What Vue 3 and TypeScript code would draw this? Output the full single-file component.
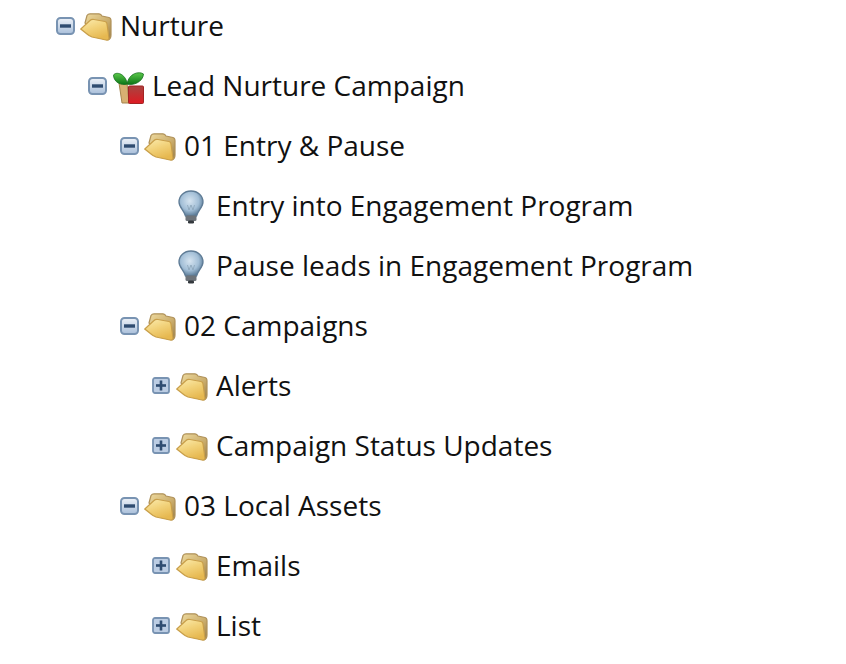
<template>
  <div class="tree">
    <svg class="defs" width="0" height="0" aria-hidden="true">
      <defs>
        <linearGradient id="folderFront" x1="0" y1="0" x2="0.45" y2="1">
          <stop offset="0" stop-color="#fbecb0" />
          <stop offset="0.5" stop-color="#f2d27a" />
          <stop offset="1" stop-color="#e6b850" />
        </linearGradient>
        <linearGradient id="folderBack" x1="0" y1="0" x2="1" y2="1">
          <stop offset="0" stop-color="#eeda9e" />
          <stop offset="0.6" stop-color="#c9ab6a" />
          <stop offset="1" stop-color="#947a48" />
        </linearGradient>
        <linearGradient id="toggleFill" x1="0" y1="0" x2="0" y2="1">
          <stop offset="0" stop-color="#eef2f8" />
          <stop offset="1" stop-color="#a9bfda" />
        </linearGradient>
        <linearGradient id="leaf" x1="0" y1="0" x2="0" y2="1">
          <stop offset="0" stop-color="#5cc94a" />
          <stop offset="1" stop-color="#0a7516" />
        </linearGradient>
        <linearGradient id="redBox" x1="0" y1="0" x2="0" y2="1">
          <stop offset="0" stop-color="#a84440" />
          <stop offset="1" stop-color="#de1a22" />
        </linearGradient>
        <radialGradient id="bulb" cx="0.45" cy="0.4" r="0.62">
          <stop offset="0" stop-color="#d6e4f0" />
          <stop offset="0.6" stop-color="#a3bfd7" />
          <stop offset="1" stop-color="#557692" />
        </radialGradient>
      </defs>
    </svg>

    <div
      v-for="row in rows"
      :key="row.label"
      class="row"
      :class="`depth-${row.depth}`"
    >
      <span class="toggle-slot">
        <svg v-if="row.toggle === 'minus'" class="toggle" viewBox="0 0 19 18">
          <rect x="1" y="1" width="17" height="16" rx="3.500" fill="url(#toggleFill)" stroke="#7893b2" stroke-width="2" />
          <rect x="4" y="7.300" width="11" height="3.400" fill="#2f4c70" />
        </svg>
        <svg v-else-if="row.toggle === 'plus'" class="toggle plus" viewBox="0 0 18 17">
          <rect x="1" y="1" width="16" height="15" rx="2" fill="#bccde3" stroke="#7893b2" stroke-width="1.800" />
          <rect x="4" y="7.200" width="10" height="2.600" fill="#2f4c70" />
          <rect x="7.700" y="3.500" width="2.600" height="10" fill="#2f4c70" />
        </svg>
      </span>

      <svg v-if="row.icon === 'folder'" class="icon folder" viewBox="0 0 32 28">
        <path d="M5 10 L7 2.500 Q8 0.800 10 0.800 L19 0.800 Q21 1 22 3 L29 4.500 Q31 5 31 8 L31 22 Q31 26 28 27 L20 25 Z" fill="url(#folderBack)" stroke="#b0925a" stroke-width="1.200" />
        <path d="M0.800 16 L10 7.500 Q11.500 6 14 6.500 L25 8.500 Q27 9 27 11 L29 25 Q29 27.500 26 27 L12 24 Q8.500 22.500 7 21 Z" fill="url(#folderFront)" stroke="#c99f4a" stroke-width="1.200" />
      </svg>

      <svg v-else-if="row.icon === 'sprout'" class="icon sprout" viewBox="0 0 31 33">
        <path d="M6 12 L14 12 L16 32 L9 32 Z" fill="#d8b072" stroke="#a5854e" stroke-width="1" />
        <path d="M14.500 13 C12 2 3 0.500 0.500 4 C0.500 11 8 15 14.500 13 Z" fill="url(#leaf)" stroke="#17701f" stroke-width="0.8" />
        <path d="M14 13 C16 2 26 0 30.500 3 C30 11 20 15 14 13 Z" fill="url(#leaf)" stroke="#17701f" stroke-width="0.8" />
        <rect x="15.500" y="15" width="15" height="17.500" rx="1" fill="url(#redBox)" stroke="#a32424" stroke-width="1" />
      </svg>

      <svg v-else class="icon bulb" viewBox="0 0 26 34">
        <path d="M13 1 C6 1 1 6 1 12 C1 17.500 6 20 7.500 26 L18.500 26 C20 20 25 17.500 25 12 C25 6 20 1 13 1 Z" fill="url(#bulb)" stroke="#5f7c96" stroke-width="1.300" />
        <path d="M9.500 15 L11 20 L13 15 L15 20 L16.500 15" fill="none" stroke="#8aa3b8" stroke-width="0.8" />
        <rect x="7.500" y="25.500" width="11" height="5.500" rx="1.500" fill="#6e747a" />
        <rect x="10" y="30.500" width="6" height="3" rx="1.300" fill="#34393e" />
      </svg>

      <span class="label">{{ row.label }}</span>
    </div>
  </div>
</template>

<script setup lang="ts">
interface TreeRow {
  label: string;
  depth: number;
  icon: 'folder' | 'sprout' | 'bulb';
  toggle?: 'minus' | 'plus';
}

const rows: TreeRow[] = [
  { label: 'Nurture', depth: 0, icon: 'folder', toggle: 'minus' },
  { label: 'Lead Nurture Campaign', depth: 1, icon: 'sprout', toggle: 'minus' },
  { label: '01 Entry & Pause', depth: 2, icon: 'folder', toggle: 'minus' },
  { label: 'Entry into Engagement Program', depth: 3, icon: 'bulb' },
  { label: 'Pause leads in Engagement Program', depth: 3, icon: 'bulb' },
  { label: '02 Campaigns', depth: 2, icon: 'folder', toggle: 'minus' },
  { label: 'Alerts', depth: 3, icon: 'folder', toggle: 'plus' },
  { label: 'Campaign Status Updates', depth: 3, icon: 'folder', toggle: 'plus' },
  { label: '03 Local Assets', depth: 2, icon: 'folder', toggle: 'minus' },
  { label: 'Emails', depth: 3, icon: 'folder', toggle: 'plus' },
  { label: 'List', depth: 3, icon: 'folder', toggle: 'plus' }
];
</script>

<style scoped>
.tree {
  display: flex;
  flex-direction: column;
  gap: 10px;
  font-family: "Open Sans", "Liberation Sans", sans-serif;
  font-size: 28px;
  color: #111;
  background: #fff;
  height: 664px;
  overflow: hidden;
}

.defs {
  position: absolute;
}

.row {
  display: flex;
  align-items: center;
  height: 50px;
}

.depth-0 { padding-left: 56px; }
.depth-1 { padding-left: 88px; }
.depth-2 { padding-left: 120px; }
.depth-3 { padding-left: 152px; }

.toggle-slot {
  display: flex;
  width: 24px;
  flex-shrink: 0;
}

.toggle {
  width: 19px;
  height: 18px;
  margin-top: 1px;
  filter: blur(0.5px);
}

.toggle.plus {
  width: 18px;
  height: 17px;
}

.icon {
  flex-shrink: 0;
  filter: blur(0.6px);
}

.folder {
  width: 32px;
  height: 28px;
  margin-top: 3px;
}

.sprout {
  width: 31px;
  height: 33px;
  margin-top: 4px;
  margin-left: 1px;
}

.bulb {
  width: 26px;
  height: 34px;
  margin-top: 3px;
  margin-left: 2px;
  margin-right: 4px;
}

.label {
  margin-left: 8px;
  white-space: nowrap;
}
</style>
